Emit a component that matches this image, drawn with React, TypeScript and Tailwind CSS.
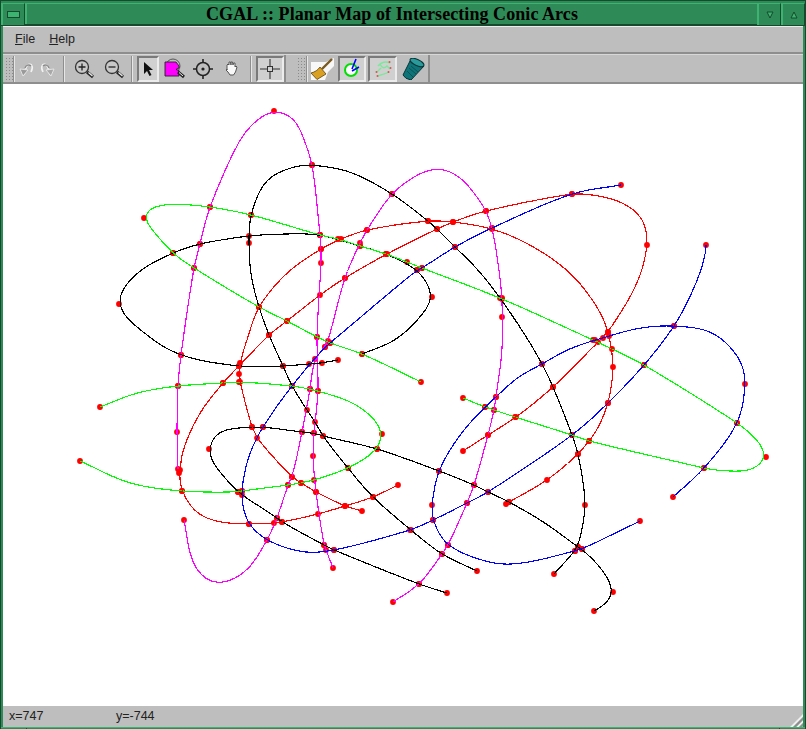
import React from "react";

// each curve: "x,y" points in page pixels, a leading ~ means shape only (no red dot)
const curves: { color: string; pts: string }[] = [
  { color: "#ff00ff", pts: "333,568 326,550 324,545 316,492 313,456 314,433 318,391 317,337 321,263 321,249 320,235 312,165 ~303,137 ~293,118 274,111 ~257,120 ~240,140 210,207 200,244 194,268 181,355 178,386 177,432 178,469" },
  { color: "#ff00ff", pts: "184,520 ~193,563 ~207,580 ~223,583 ~247,570 267,540 277,518 288,485 292,477 302,432 310,389 315,359 325,347 328,341 345,278 360,243 367,230 392,194 ~417,175 ~433,169 ~447,170 ~463,180 ~477,197 486,211 492,228 ~498,263 502,298 502,317 ~502,350 496,397 494,410 488,435 474,485 467,503 448,545 442,554 419,584 393,602" },
  { color: "#000000", pts: "338,360 322,363 309,364 283,366 239,366 181,355 ~147,335 119,304 ~135,275 173,253 200,244 249,236 ~285,234 320,235 360,246 386,254 417,270 ~425,280 432,297 ~420,317 ~395,340 362,354" },
  { color: "#000000", pts: "477,571 442,554 411,530 373,497 348,468 323,436 315,422 307,410 292,386 283,366 269,335 259,307 ~251,275 249,243 251,215 ~267,180 ~297,166 312,165 ~350,172 392,194 428,221 437,229 455,247 ~478,270 500,298 ~525,335 542,364 553,387 572,435 578,454 585,505 578,547 575,551 554,574" },
  { color: "#000000", pts: "447,593 419,584 334,550 324,545 282,522 277,518 242,495 238,492 ~213,463 209,449 ~217,433 ~230,429 252,427 263,427 302,432 314,433 323,436 377,449 439,471 474,485 488,492 509,502 ~545,523 578,547 582,549 ~600,567 ~607,577 613,592 ~607,603 594,611" },
  { color: "#00ff00", pts: "463,398 485,407 494,410 515,417 572,435 589,441 704,468 ~713,470 ~747,471 ~757,467 766,457 ~757,440 737,423 644,365 612,349 593,340 502,299 422,268 407,262 386,254 360,246 338,239 320,235 251,215 210,207 ~173,204 ~157,206 ~147,210 144,218 ~150,227 173,253 194,268 259,307 287,321 317,337 330,343 362,354 421,382" },
  { color: "#00ff00", pts: "100,407 ~137,393 178,386 223,383 239,382 292,386 310,389 318,391 ~353,403 ~375,420 382,434 377,449 348,468 314,480 301,483 288,485 242,491 238,492 182,491 ~130,483 80,461" },
  { color: "#ff0000", pts: "463,451 488,435 516,417 553,387 598,342 608,332 ~637,283 647,245 ~643,220 ~623,203 ~593,195 572,194 486,211 453,222 437,229 387,254 345,278 320,295 287,321 269,335 239,366 223,383 ~200,413 ~183,450 180,470 179,473 182,491 ~197,513 ~220,522 249,524 274,523 282,522 318,514 345,506 373,497 398,485" },
  { color: "#ff0000", pts: "362,511 345,506 316,492 301,483 292,477 257,438 252,427 240,382 239,374 240,363 ~247,340 259,307 ~287,273 321,249 341,239 367,230 428,221 453,222 492,229 ~530,245 ~570,273 ~597,307 608,332 613,367 608,403 ~597,430 589,441 578,454 547,480 509,502 506,504" },
  { color: "#0000ff", pts: "621,185 572,194 492,228 455,247 422,268 417,270 330,343 325,347 292,386 263,427 ~250,453 ~243,480 242,491 ~242,503 249,524 267,540 ~303,552 334,550 410,530 433,520 467,503 488,492 572,435 608,403 644,365 674,326 ~693,290 ~705,257 706,245" },
  { color: "#0000ff", pts: "640,521 582,549 575,551 ~523,563 ~493,563 448,545 433,520 432,505 439,471 ~460,435 485,407 496,397 ~517,378 542,364 ~567,350 595,340 603,338 609,336 ~640,328 674,326 ~713,333 ~740,360 745,384 737,423 704,468 673,497" },
];

type Pt = { x: number; y: number; dot: boolean };

function parse(pts: string): Pt[] {
  return pts.split(" ").map((s) => {
    const dot = !s.startsWith("~");
    const [x, y] = s.replace("~", "").split(",").map(Number);
    return { x, y, dot };
  });
}

// spline through the points sampled about every pixel, then averaged so the
// hand-read coordinates don't leave lumps
function toPath(p: Pt[]) {
  const tan = (i: number) => {
    const a = p[Math.max(i - 1, 0)];
    const b = p[Math.min(i + 1, p.length - 1)];
    const l = Math.hypot(b.x - a.x, b.y - a.y) || 1;
    return { x: (b.x - a.x) / l, y: (b.y - a.y) / l };
  };
  const s: { x: number; y: number }[] = [];
  for (let i = 0; i < p.length - 1; i++) {
    const a = p[i];
    const b = p[i + 1];
    const len = Math.hypot(b.x - a.x, b.y - a.y);
    const t0 = tan(i);
    const t1 = tan(i + 1);
    const c1 = { x: a.x + (t0.x * len) / 3, y: a.y + (t0.y * len) / 3 };
    const c2 = { x: b.x - (t1.x * len) / 3, y: b.y - (t1.y * len) / 3 };
    const n = Math.max(2, Math.round(len));
    for (let k = 0; k < n; k++) {
      const t = k / n;
      const u = 1 - t;
      s.push({
        x: u * u * u * a.x + 3 * u * u * t * c1.x + 3 * u * t * t * c2.x + t * t * t * b.x,
        y: u * u * u * a.y + 3 * u * u * t * c1.y + 3 * u * t * t * c2.y + t * t * t * b.y,
      });
    }
  }
  s.push({ x: p[p.length - 1].x, y: p[p.length - 1].y });
  let out = s;
  for (let pass = 0; pass < 3; pass++) {
    out = out.map((_, i) => {
      const w = Math.min(i, out.length - 1 - i, 7);
      let x = 0;
      let y = 0;
      for (let j = i - w; j <= i + w; j++) {
        x += out[j].x;
        y += out[j].y;
      }
      return { x: x / (2 * w + 1), y: y / (2 * w + 1) };
    });
  }
  return "M" + out.map((q) => `${q.x.toFixed(1)} ${q.y.toFixed(1)}`).join("L");
}

function Plot() {
  const parsed = curves.map((c) => ({ color: c.color, p: parse(c.pts) }));
  return (
    <svg viewBox="3 84 800 622" className="block w-[800px] h-[622px]">
      {parsed.flatMap((c, i) =>
        c.p.filter((q) => q.dot).map((q, j) => <circle key={`${i}-${j}`} cx={q.x} cy={q.y} r={2.9} fill="#ff0000" />)
      )}
      {parsed.map((c, i) => (
        <path key={i} d={toPath(c.p)} fill="none" stroke={c.color} strokeWidth={1.15} shapeRendering="crispEdges" />
      ))}
    </svg>
  );
}

function Icon({ children, w = 22 }: { children: React.ReactNode; w?: number }) {
  return (
    <svg width={w} height={22} viewBox={`0 0 ${w} 22`} className="block">
      {children}
    </svg>
  );
}

function Lens({ children }: { children?: React.ReactNode }) {
  return (
    <Icon>
      <circle cx="9" cy="9" r="6.500" fill="#c8c8c8" stroke="#333" strokeWidth="1.3" />
      {children}
      <path d="M14 14l6 5" stroke="#222" strokeWidth="3" />
      <path d="M15.500 14.500l4 3.500" stroke="#f0f0f0" strokeWidth="1.200" />
    </Icon>
  );
}

function Btn({ children, on, w = "w-[29px]" }: { children: React.ReactNode; on?: boolean; w?: string }) {
  return (
    <div className={`${w} h-[26px] shrink-0 flex items-center justify-center ${on ? "bg-[#d0d0d0] border-2 border-t-[#7a7a7a] border-l-[#7a7a7a] border-r-[#ececec] border-b-[#ececec]" : ""}`}>
      {children}
    </div>
  );
}

function Handle() {
  return <div className="w-[8px] h-[24px] shrink-0 bg-[radial-gradient(#8a8a8a_1px,transparent_1px)] bg-[length:3px_3px]" />;
}

function Sep() {
  return <div className="w-[2px] h-[26px] shrink-0 bg-[#8e8e8e] border-r border-[#e6e6e6]" />;
}

function TitleButton({ children }: { children?: React.ReactNode }) {
  return (
    <div className="w-[24px] h-[22px] shrink-0 flex items-center justify-center bg-[#2e8b57] border-l-2 border-t border-l-[#3cb371] border-t-[#3cb371] border-r border-r-[#17492c]">
      {children}
    </div>
  );
}

export default function App() {
  return (
    <div className="w-[806px] h-[729px] bg-[#2e8b57] flex flex-col overflow-hidden font-['Liberation_Sans',sans-serif] border-l border-r border-t border-[#17492c]">
      <div className="h-[25px] shrink-0 flex items-stretch pt-[2px] border-b-2 border-[#17492c]">
        <TitleButton>
          <div className="w-[13px] h-[7px] border border-[#17492c] bg-[#3cb371]" />
        </TitleButton>
        <div className="flex-1 flex items-center justify-center border-l-2 border-t border-[#3cb371] pl-[3px] pr-[3px]">
          <span className="font-['Liberation_Serif',serif] font-bold text-[18px] tracking-[0.07px] leading-none text-black">
            CGAL :: Planar Map of Intersecting Conic Arcs
          </span>
        </div>
        <TitleButton>
          <svg width="8" height="8" viewBox="0 0 8 8"><path d="M1 1h6L4 7z" fill="#3cb371" stroke="#17492c" /></svg>
        </TitleButton>
        <TitleButton>
          <svg width="8" height="8" viewBox="0 0 8 8"><path d="M1 7h6L4 1z" fill="#3cb371" stroke="#17492c" /></svg>
        </TitleButton>
      </div>

      <div className="flex-1 flex flex-col mx-[2px] border-t border-[#ececec] bg-[#bebebe] min-h-0">
        <div className="h-[25px] shrink-0 flex items-center gap-[14px] pl-[12px] text-[12.5px] text-[#222]">
          <span><span className="underline">F</span>ile</span>
          <span><span className="underline">H</span>elp</span>
        </div>
        <div className="h-[3px] shrink-0 bg-[#8e8e8e] border-b border-[#d8d8d8]" />

        <div className="h-[29px] shrink-0 flex items-center border-b-2 border-[#8e8e8e]">
          <div className="h-full flex items-center pl-[2px] border-r-2 border-[#8e8e8e]">
            <Handle />
            <Sep />
            <div className="w-[22px] shrink-0 flex justify-center">
              <Icon w={16}>
                <path d="M6 17l2-7c1-4 5-5 6-2 1 2 0 4-1 6" fill="none" stroke="#f2f2f2" strokeWidth="1.600" />
                <path d="M2 11l8 1-5 6z" fill="#9a9a9a" stroke="#ededed" strokeWidth="0.800" />
                <path d="M7 10c1-3 4-4 6-2" fill="none" stroke="#8a8a8a" strokeWidth="1.400" />
              </Icon>
            </div>
            <div className="w-[22px] shrink-0 flex justify-center">
              <Icon w={16}>
                <path d="M10 17L8 10C7 6 3 5 2 8c-1 2 0 4 1 6" fill="none" stroke="#f2f2f2" strokeWidth="1.600" />
                <path d="M14 11l-8 1 5 6z" fill="#a8a8a8" stroke="#ededed" strokeWidth="0.800" />
                <path d="M9 10C8 7 5 6 3 8" fill="none" stroke="#8a8a8a" strokeWidth="1.400" />
              </Icon>
            </div>
            <div className="w-[4px] shrink-0" />
            <Sep />
            <div className="w-[4px] shrink-0" />
            <Btn>
              <Lens>
                <path d="M5.500 9h7M9 5.500v7" stroke="#222" strokeWidth="1.300" />
              </Lens>
            </Btn>
            <div className="w-[1px] shrink-0" />
            <Btn>
              <Lens>
                <path d="M5.500 9h7" stroke="#222" strokeWidth="1.300" />
              </Lens>
            </Btn>
            <div className="w-[3px] shrink-0" />
            <Sep />
            <div className="w-[4px] shrink-0" />
            <Btn on w="w-[22px]">
              <Icon w={14}>
                <path d="M3 4v12l3-3 2.500 5 2-1-2.500-5h4z" fill="#111" />
              </Icon>
            </Btn>
            <Btn>
              <Icon>
                <circle cx="10" cy="8" r="7" fill="none" stroke="#555" strokeWidth="1" />
                <path d="M2 4h11l3 4v2l-3 1.500 3 1V18H2z" fill="#ff00ff" stroke="#222" strokeWidth="0.900" />
                <path d="M15 14l6 5" stroke="#222" strokeWidth="3" />
                <path d="M16 14.500l4 3.500" stroke="#eee" strokeWidth="1" />
              </Icon>
            </Btn>
            <Btn>
              <Icon>
                <circle cx="11" cy="11" r="6.500" fill="none" stroke="#222" strokeWidth="1.500" />
                <circle cx="11" cy="11" r="1.600" fill="#222" />
                <path d="M11 1v4M11 17v4M1 11h4M17 11h4" stroke="#222" strokeWidth="1.600" />
              </Icon>
            </Btn>
            <Btn>
              <Icon>
                <path d="M6 12V7l1-1 1 1V4h1.500l.5 3V4h1.500l.5 3 .5-2h1.500v4l1-1 1 1-1.500 5-2 3H9l-2-3-2-2 1-1z" fill="#f8f8f8" stroke="#555" strokeWidth="1" />
              </Icon>
            </Btn>
            <div className="w-[4px] shrink-0" />
            <Sep />
            <div className="w-[4px] shrink-0" />
            <Btn on w="w-[28px]">
              <Icon>
                <path d="M11 1v20M1 11h20" stroke="#333" strokeWidth="1.100" />
                <rect x="8.500" y="8.500" width="5" height="5" fill="#d0d0d0" stroke="#333" />
              </Icon>
            </Btn>
          </div>

          <div className="w-[10px] shrink-0" />
          <div className="h-full flex items-center pl-[1px] border-r-2 border-[#8e8e8e]">
            <Handle />
            <div className="w-[1px] shrink-0" />
            <Sep />
            <div className="w-[1px] shrink-0" />
            <Btn w="w-[26px]">
              <Icon w={26}>
                <path d="M2 4h15l8-4v8l-6 6-3 8H2z" fill="#f8f8f8" />
                <path d="M13 11L23 1" stroke="#7a5a20" strokeWidth="2.400" />
                <path d="M11 9l6 7-9 5.500L2 15c4-1 7-3 9-6z" fill="#d9a021" stroke="#5a4210" strokeWidth="0.800" />
              </Icon>
            </Btn>
            <div className="w-[3px] shrink-0" />
            <Btn on w="w-[28px]">
              <Icon>
                <circle cx="10" cy="12" r="6" fill="#fff" stroke="#00e000" strokeWidth="2" />
                <path d="M15 1l-4 10M18 9l-7 4" stroke="#0000ff" strokeWidth="1.600" />
              </Icon>
            </Btn>
            <div className="w-[2px] shrink-0" />
            <Btn on>
              <Icon>
                <path d="M6 8C9 4 14 3 18 5M8 6c2 4 4 5 7 2l3 3M5 14l4-4M6 18c4-2 8-2 11-4" fill="none" stroke="#7ce89a" strokeWidth="1.400" />
                <g fill="#e05050">
                  <circle cx="17.500" cy="4" r="1" />
                  <circle cx="4.500" cy="14" r="1" />
                  <circle cx="18.500" cy="10" r="1" />
                  <circle cx="16.500" cy="14" r="1" />
                  <circle cx="5.500" cy="18" r="1" />
                </g>
              </Icon>
            </Btn>
            <div className="w-[1px] shrink-0" />
            <Btn w="w-[30px]">
              <Icon w={26}>
                <path d="M10 3L3 17q2 4 8 5L24 8z" fill="#0f7478" stroke="#073638" strokeWidth="1" />
                <ellipse cx="17" cy="4.500" rx="7.500" ry="3" fill="#2a9a9a" stroke="#073638" transform="rotate(25 17 4.500)" />
                <path d="M7 13l6 6M9 10l7 6M11 8l7 6" stroke="#0a4f50" strokeWidth="0.900" />
              </Icon>
            </Btn>
          </div>
        </div>

        <div className="bg-white h-[622px] shrink-0">
          <Plot />
        </div>

        <div className="flex-1 flex items-center text-[12.5px] text-[#222] pl-[6px] min-h-0">
          <span className="w-[107px]">x=747</span>
          <span>y=-744</span>
          {/* resize grip in the corner */}
          <svg width="13" height="13" viewBox="0 0 13 13" className="block ml-auto self-end">
            <path d="M13 0L0 13h3L13 3zM13 6l-7 7h3l4-4z" fill="#f0f0f0" />
            <path d="M13 3L3 13h3l7-7zM13 9l-4 4h3l1-1z" fill="#8e8e8e" />
          </svg>
        </div>
      </div>

      <div className="h-[2px] shrink-0 flex justify-between border-t border-[#3cb371] border-b-0">
        <div className="w-[26px] border-r border-[#17492c]" />
        <div className="w-[26px] border-l border-[#17492c]" />
      </div>
    </div>
  );
}
